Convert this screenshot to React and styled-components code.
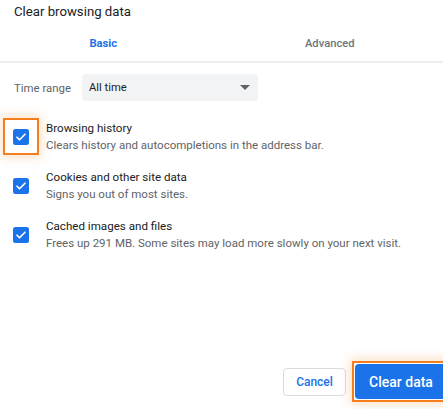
import React from 'react';
import styled, { createGlobalStyle } from 'styled-components';

const GlobalStyle = createGlobalStyle`
  html, body {
    margin: 0;
    padding: 0;
    background: #ffffff;
    overflow: hidden;
  }
  body {
    font-family: Roboto, "Liberation Sans", Arial, sans-serif;
    color: #202124;
  }
`;

const Dialog = styled.div`
  width: 443px;
  height: 409px;
  display: flex;
  flex-direction: column;
  overflow: hidden;
`;

const Title = styled.h2`
  margin: 0;
  padding: 2px 14px 0;
  height: 22px;
  font-size: 13.2px;
  font-weight: 400;
  line-height: 20px;
  color: #202124;
`;

const Tabs = styled.div`
  display: flex;
  margin-left: -10px;
  border-bottom: 2px solid #eceef0;
`;

const Tab = styled.div`
  flex: 1;
  height: 37px;
  padding-top: 2px;
  box-sizing: border-box;
  display: flex;
  align-items: center;
  justify-content: center;
  font-size: 11.2px;
  font-weight: ${(p) => (p.active ? 700 : 500)};
  color: ${(p) => (p.active ? '#1a73e8' : '#70757a')};
`;

const RangeRow = styled.div`
  display: flex;
  align-items: center;
  gap: 11px;
  padding: 11px 14px 0;
`;

const Label = styled.span`
  font-size: 11.4px;
  color: #5f6368;
`;

const Select = styled.div`
  width: 176px;
  height: 27px;
  box-sizing: border-box;
  padding: 0 8px 0 7px;
  display: flex;
  align-items: center;
  justify-content: space-between;
  background: #f1f3f4;
  border-radius: 4px;
  font-size: 11.2px;
  color: #202124;
`;

const Arrow = styled.span`
  width: 0;
  height: 0;
  border-left: 5px solid transparent;
  border-right: 5px solid transparent;
  border-top: 5px solid #5f6368;
`;

const List = styled.div`
  display: flex;
  flex-direction: column;
  gap: 15px;
  padding-top: 19px;
`;

const Item = styled.div`
  display: flex;
  align-items: center;
`;

const CheckCell = styled.div`
  width: 46px;
  padding-left: 13px;
  box-sizing: border-box;
  flex-shrink: 0;
`;

const Box = styled.div`
  position: relative;
  width: 16px;
  height: 16px;
  border-radius: 2.5px;
  background: #1a73e8;
  display: flex;
  align-items: center;
  justify-content: center;
`;

const Highlight = styled.div`
  position: absolute;
  left: -10px;
  top: -11px;
  width: 36px;
  height: 37px;
  box-sizing: border-box;
  border: 2px solid #f57f1f;
  box-shadow: 0 0 10px 2px rgba(245, 140, 50, 0.28);
`;

const Texts = styled.div`
  display: flex;
  flex-direction: column;
`;

const ItemTitle = styled.div`
  font-size: 11.6px;
  line-height: 17px;
  color: #202124;
`;

const ItemDesc = styled.div`
  font-size: 11.5px;
  line-height: 17px;
  color: #5f6368;
`;

const Footer = styled.div`
  margin-top: auto;
  display: flex;
  justify-content: flex-end;
  align-items: center;
  gap: 9px;
  padding-bottom: 10px;
`;

const CancelButton = styled.button`
  flex-shrink: 0;
  width: 63px;
  height: 28px;
  box-sizing: border-box;
  border: 1px solid #dadce0;
  border-radius: 4px;
  background: #ffffff;
  color: #1a73e8;
  font-family: inherit;
  font-size: 12px;
  font-weight: 500;
  padding: 0;
`;

const PrimaryWrap = styled.div`
  position: relative;
  display: flex;
  flex-shrink: 0;
`;

const PrimaryButton = styled.button`
  width: 88px;
  height: 35px;
  box-sizing: border-box;
  white-space: nowrap;
  border: none;
  border-radius: 4px 0 0 4px;
  background: #1a73e8;
  color: #ffffff;
  font-family: inherit;
  font-size: 14px;
  font-weight: 500;
  padding: 0 10px 0 14px;
`;

const PrimaryHighlight = styled.div`
  position: absolute;
  left: -3px;
  top: -3px;
  right: -4px;
  bottom: -3px;
  border: 2px solid #f57f1f;
  box-shadow: 0 0 10px 2px rgba(245, 140, 50, 0.28);
  pointer-events: none;
`;

const Check = () => (
  <svg width="12" height="12" viewBox="0 0 24 24">
    <path d="M4 12.5l5 5L20 6.5" fill="none" stroke="#fff" strokeWidth="3.4" strokeLinecap="round" strokeLinejoin="round" />
  </svg>
);

const items = [
  { title: 'Browsing history', desc: 'Clears history and autocompletions in the address bar.', focus: true },
  { title: 'Cookies and other site data', desc: 'Signs you out of most sites.' },
  { title: 'Cached images and files', desc: 'Frees up 291 MB. Some sites may load more slowly on your next visit.' },
];

export default function App() {
  return (
    <>
      <GlobalStyle />
      <Dialog>
        <Title>Clear browsing data</Title>
        <Tabs>
          <Tab active>Basic</Tab>
          <Tab>Advanced</Tab>
        </Tabs>
        <RangeRow>
          <Label>Time range</Label>
          <Select>
            All time
            <Arrow />
          </Select>
        </RangeRow>
        <List>
          {items.map((it) => (
            <Item key={it.title}>
              <CheckCell>
                <Box>
                  <Check />
                  {it.focus && <Highlight />}
                </Box>
              </CheckCell>
              <Texts>
                <ItemTitle>{it.title}</ItemTitle>
                <ItemDesc>{it.desc}</ItemDesc>
              </Texts>
            </Item>
          ))}
        </List>
        <Footer>
          <CancelButton>Cancel</CancelButton>
          <PrimaryWrap>
            <PrimaryButton>Clear data</PrimaryButton>
            <PrimaryHighlight />
          </PrimaryWrap>
        </Footer>
      </Dialog>
    </>
  );
}
